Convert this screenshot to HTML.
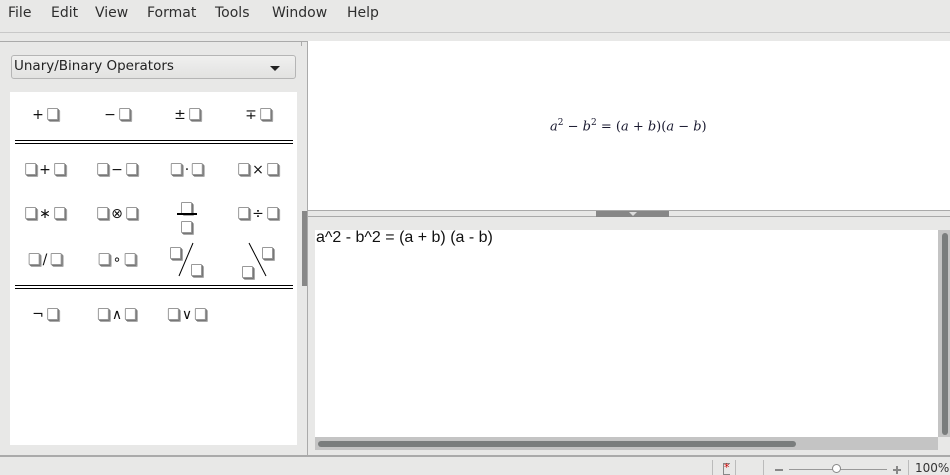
<!DOCTYPE html>
<html><head><meta charset="utf-8"><style>
*{margin:0;padding:0;box-sizing:border-box}
body{width:950px;height:475px;overflow:hidden;background:#e8e8e7;font-family:"DejaVu Sans","Liberation Sans",sans-serif;position:relative;color:#222}
.a{position:absolute}
.menu span{position:absolute;top:5px;font-size:14px;color:#2e2e2e}
.b{display:inline-block;width:11px;height:12px;border:1px solid #999;border-radius:1px;background:#fff;box-shadow:1px 1px 0 #777,2px 2px 0 #aaa;vertical-align:-1px}
.it{position:absolute;font-size:14px;line-height:16px;white-space:nowrap;transform:translateX(-50%);color:#111}
.it i{font-style:normal;display:inline-block;margin:0 3px}
.dl{position:absolute;left:15px;width:278px;height:4px;border-top:1.5px solid #000;border-bottom:1.5px solid #000}
.m{font-family:"DejaVu Serif","Liberation Serif",serif;font-size:13px;color:#1a1a30}
</style></head><body>
<div class="menu">
<span style="left:8px">File</span><span style="left:51px">Edit</span><span style="left:95px">View</span><span style="left:147px">Format</span><span style="left:215px">Tools</span><span style="left:272px">Window</span><span style="left:347px">Help</span>
</div>
<div class="a" style="left:0;top:32px;width:950px;height:1px;background:#c8c8c8"></div>
<div class="a" style="left:0;top:41px;width:307px;height:1px;background:#aaa"></div>
<div class="a" style="left:307px;top:41px;width:1px;height:414px;background:#aaa"></div>
<div class="a" style="left:301px;top:41px;width:1px;height:5px;background:#aaa"></div>
<div class="a" style="left:11px;top:55px;width:285px;height:24px;border:1px solid #b5b5b5;border-radius:3px;background:linear-gradient(#f0f0ef,#e2e2e1);font-size:13.5px;padding:2px 0 0 2px;color:#222">Unary/Binary Operators</div>
<div class="a" style="left:270px;top:66px;width:0;height:0;border-left:5px solid transparent;border-right:5px solid transparent;border-top:5px solid #222"></div>
<div class="a" style="left:10px;top:92px;width:287px;height:353px;background:#fff"></div>
<div class="it" style="left:45px;top:107px"><i style="margin-left:0">+</i><span class="b"></span></div>
<div class="it" style="left:117px;top:107px"><i style="margin-left:0">−</i><span class="b"></span></div>
<div class="it" style="left:187px;top:107px"><i style="margin-left:0">±</i><span class="b"></span></div>
<div class="it" style="left:258px;top:107px"><i style="margin-left:0">∓</i><span class="b"></span></div>
<div class="dl" style="top:140px"></div>
<div class="it" style="left:45px;top:162px"><span class="b"></span><i>+</i><span class="b"></span></div>
<div class="it" style="left:117px;top:162px"><span class="b"></span><i>−</i><span class="b"></span></div>
<div class="it" style="left:187px;top:162px"><span class="b"></span><i>·</i><span class="b"></span></div>
<div class="it" style="left:258px;top:162px"><span class="b"></span><i>×</i><span class="b"></span></div>
<div class="it" style="left:45px;top:206px"><span class="b"></span><i>∗</i><span class="b"></span></div>
<div class="it" style="left:117px;top:206px"><span class="b"></span><i>⊗</i><span class="b"></span></div>
<div class="a" style="left:181px;top:198px"><span class="b"></span></div>
<div class="a" style="left:177px;top:213px;width:20px;height:2px;background:#000"></div>
<div class="a" style="left:181px;top:217px"><span class="b"></span></div>
<div class="it" style="left:258px;top:206px"><span class="b"></span><i>÷</i><span class="b"></span></div>
<div class="it" style="left:45px;top:252px"><span class="b"></span><i>/</i><span class="b"></span></div>
<div class="it" style="left:117px;top:252px"><span class="b"></span><i>∘</i><span class="b"></span></div>
<div class="a" style="left:170px;top:243px"><span class="b"></span></div>
<div class="a" style="left:191px;top:260px"><span class="b"></span></div>
<svg class="a" style="left:175px;top:240px" width="25" height="38"><line x1="18" y1="3" x2="4" y2="36" stroke="#000"/></svg>
<div class="a" style="left:262px;top:243px"><span class="b"></span></div>
<div class="a" style="left:242px;top:262px"><span class="b"></span></div>
<svg class="a" style="left:245px;top:240px" width="25" height="38"><line x1="4" y1="3" x2="21" y2="36" stroke="#000"/></svg>
<div class="dl" style="top:285px"></div>
<div class="it" style="left:45px;top:307px"><i style="margin-left:0">¬</i><span class="b"></span></div>
<div class="it" style="left:117px;top:307px"><span class="b"></span><i>∧</i><span class="b"></span></div>
<div class="it" style="left:187px;top:307px"><span class="b"></span><i>∨</i><span class="b"></span></div>
<div class="a" style="left:302px;top:211px;width:5px;height:75px;background:#888"></div>
<div class="a" style="left:308px;top:41px;width:642px;height:170px;background:#fff"></div>
<div class="a m" style="left:550px;top:118px">𝑎<sup style="font-size:9px">2</sup> − 𝑏<sup style="font-size:9px">2</sup> = (𝑎 + 𝑏)(𝑎 − 𝑏)</div>
<div class="a" style="left:308px;top:210px;width:642px;height:1px;background:#aaa"></div>
<div class="a" style="left:308px;top:216px;width:642px;height:1px;background:#aaa"></div>
<div class="a" style="left:596px;top:211px;width:73px;height:6px;background:#878787"></div>
<div class="a" style="left:629px;top:212px;width:0;height:0;border-left:4px solid transparent;border-right:4px solid transparent;border-top:4px solid #ddd"></div>
<div class="a" style="left:315px;top:230px;width:623px;height:207px;background:#fff"></div>
<div class="a" style="left:316px;top:229px;font-family:'Liberation Sans',sans-serif;font-size:16px;color:#111">a^2 - b^2 = (a + b) (a - b)</div>
<div class="a" style="left:938px;top:230px;width:12px;height:207px;background:#c4c4c4"></div>
<div class="a" style="left:942px;top:233px;width:6px;height:202px;background:#7a7d7d;border-radius:3px"></div>
<div class="a" style="left:315px;top:437px;width:623px;height:13px;background:#c4c4c4"></div>
<div class="a" style="left:318px;top:441px;width:478px;height:6px;background:#7a7d7d;border-radius:3px"></div>
<div class="a" style="left:0;top:455px;width:950px;height:2px;background:#aaa"></div>
<div class="a" style="left:712px;top:460px;width:1px;height:15px;background:#bbb"></div>
<div class="a" style="left:735px;top:460px;width:1px;height:15px;background:#bbb"></div>
<div class="a" style="left:763px;top:460px;width:1px;height:15px;background:#bbb"></div>
<div class="a" style="left:908px;top:460px;width:1px;height:15px;background:#bbb"></div>
<div class="a" style="left:723px;top:463px;width:7px;height:12px;border:1px solid #888;border-right:none"></div>
<div class="a" style="left:724px;top:461px;font-size:11px;color:#c00">*</div>
<div class="a" style="left:775px;top:469px;width:8px;height:2px;background:#888"></div>
<div class="a" style="left:789px;top:469px;width:98px;height:1px;background:#999"></div>
<div class="a" style="left:832px;top:464px;width:9px;height:9px;border:1px solid #888;border-radius:50%;background:#fff"></div>
<div class="a" style="left:893px;top:469px;width:8px;height:2px;background:#888"></div>
<div class="a" style="left:896px;top:466px;width:2px;height:8px;background:#888"></div>
<div class="a" style="left:915px;top:461px;font-size:12px;color:#333">100%</div>
</body></html>
